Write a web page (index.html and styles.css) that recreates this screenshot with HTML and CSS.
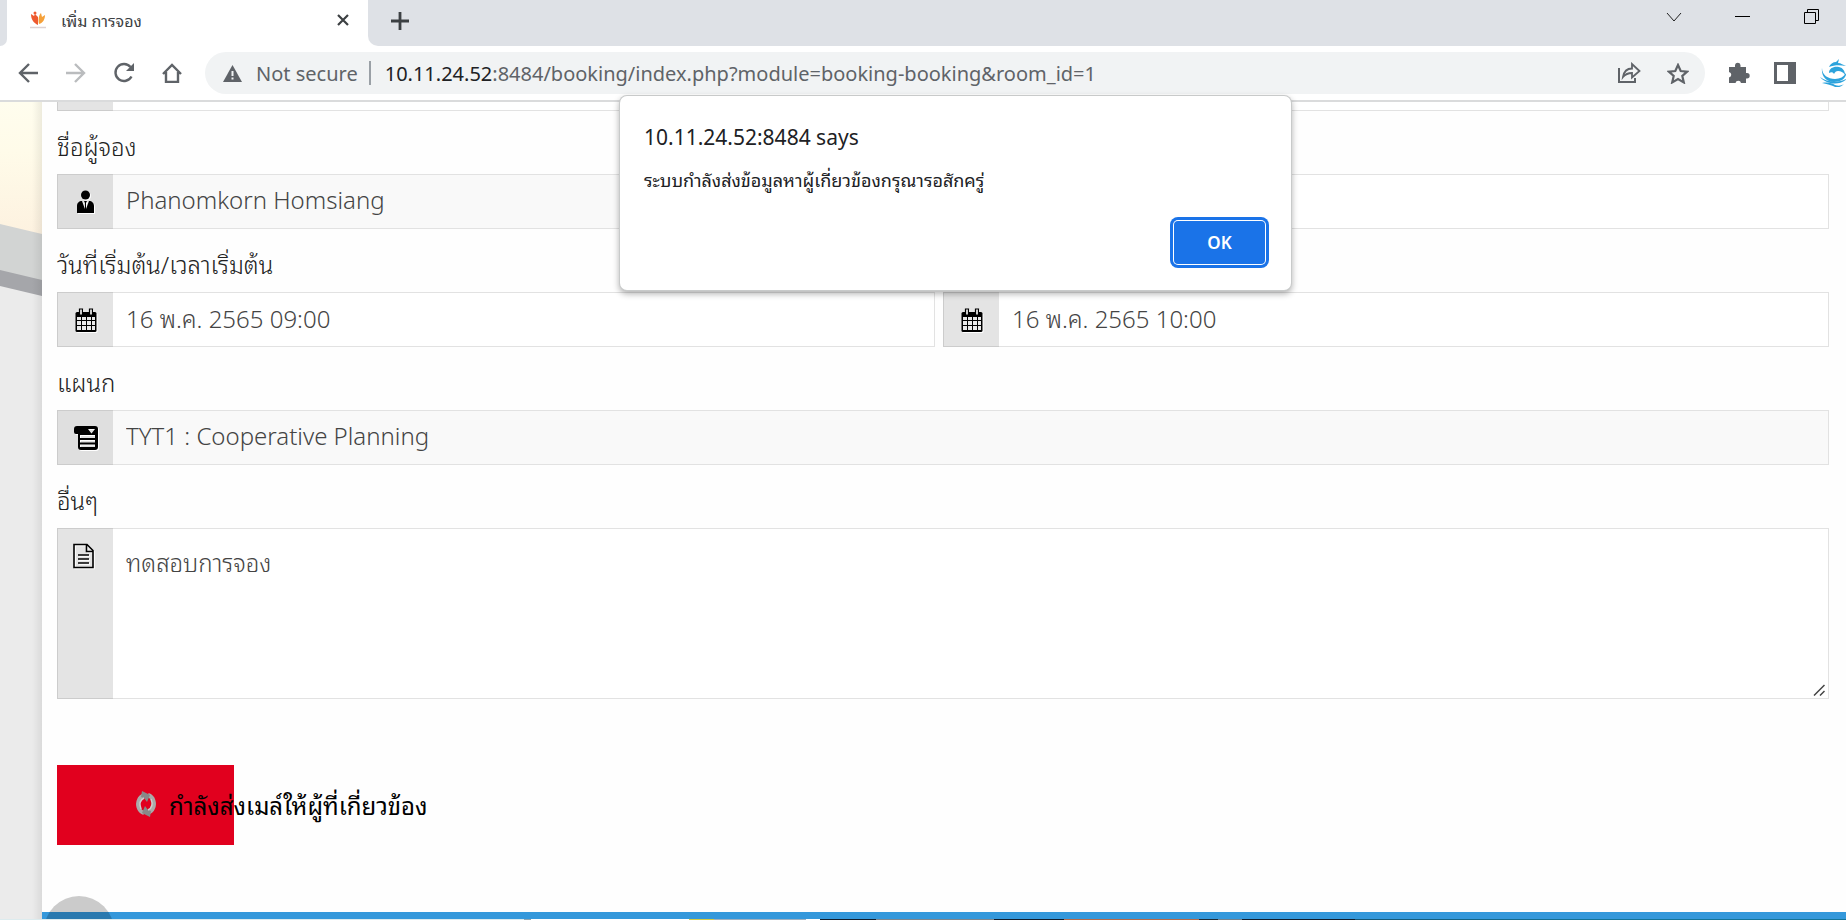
FILE: index.html
```html
<!DOCTYPE html>
<html lang="th">
<head>
<meta charset="utf-8">
<title>เพิ่ม การจอง</title>
<link rel="stylesheet" href="styles.css">
</head>
<body>
<header class="browser">
  <div class="tabstrip">
    <div class="prev-tab"></div>
    <div class="tab">
      <svg class="favicon" viewBox="0 0 16 18"><path d="M1 3l3 2 1-2 3 3v8C4 12 1 9 1 3z" fill="#ee5a2f"/><path d="M9 13c-1-5 0-9 2-11l1 4 3-2c0 4-2 8-6 9z" fill="#f5a13a"/><circle cx="5" cy="2" r="1.500" fill="#ee5a2f"/><path d="M0 16.500h16" stroke="#ddd2d2" stroke-width="1.500"/></svg>
      <span class="tab-title">เพิ่ม การจอง</span>
      <button class="icon-btn tab-close" aria-label="Close tab"><svg width="14" height="14" viewBox="0 0 14 14"><path d="M2 2l10 10M12 2L2 12" stroke="#3c4043" stroke-width="2.200"/></svg></button>
    </div>
    <button class="icon-btn new-tab" aria-label="New tab"><svg width="18" height="18" viewBox="0 0 18 18"><path d="M9 0v18M0 9h18" stroke="#3c4043" stroke-width="2.800"/></svg></button>
    <div class="window-controls">
      <button class="icon-btn" aria-label="Search tabs"><svg width="16" height="16" viewBox="0 0 16 16"><path d="M1 4l7 8 7-8" fill="none" stroke="#222" stroke-width="1"/></svg></button>
      <button class="icon-btn" aria-label="Minimize"><svg width="16" height="16" viewBox="0 0 16 16"><path d="M0 7.500h15" stroke="#000"/></svg></button>
      <button class="icon-btn" aria-label="Restore"><svg width="16" height="16" viewBox="0 0 16 16"><path d="M.5 3.500h11v11h-11zM3.500 3.500v-3h11v11h-3" fill="none" stroke="#000"/></svg></button>
    </div>
  </div>
  <div class="toolbar">
    <nav class="nav-buttons">
      <button class="icon-btn" aria-label="Back"><svg width="20" height="20" viewBox="0 0 20 20"><path d="M20 10H2M11 1l-9 9 9 9" fill="none" stroke="#5f6368" stroke-width="2.400"/></svg></button>
      <button class="icon-btn" aria-label="Forward"><svg width="20" height="20" viewBox="0 0 20 20"><path d="M0 10h18M9 1l9 9-9 9" fill="none" stroke="#babcbe" stroke-width="2.400"/></svg></button>
      <button class="icon-btn" aria-label="Reload"><svg width="22" height="22" viewBox="0 0 22 22"><path d="M18.500 14.500a8.500 8.500 0 1 1-1-9.500" fill="none" stroke="#5f6368" stroke-width="2.400"/><path d="M21 1v8h-8z" fill="#5f6368"/></svg></button>
      <button class="icon-btn" aria-label="Home"><svg width="20" height="20" viewBox="0 0 20 20"><path d="M1 11l9-9 9 9M4 9v10h12V9" fill="none" stroke="#5f6368" stroke-width="2.400"/></svg></button>
    </nav>
    <div class="omnibox">
      <svg width="19" height="17" viewBox="0 0 19 17"><path d="M9.500 0L19 17H0z" fill="#5f6368"/><path d="M9.500 6v5M9.500 12.500v2" stroke="#f1f3f4" stroke-width="2"/></svg>
      <span class="security">Not secure</span>
      <span class="divider"></span>
      <span class="url"><b>10.11.24.52</b>:8484/booking/index.php?module=booking-booking&amp;room_id=1</span>
      <button class="icon-btn" aria-label="Share"><svg width="23" height="22" viewBox="0 0 23 22"><path d="M1 6v14h16v-4" fill="none" stroke="#5f6368" stroke-width="2"/><path d="M5 15c1-6 4-8.500 9-8.500V2l7.500 7-7.500 6.500V11c-4 0-6.500 1-9 4z" fill="none" stroke="#5f6368" stroke-width="1.800"/></svg></button>
      <button class="icon-btn" aria-label="Bookmark"><svg width="22" height="21" viewBox="0 0 22 21"><path d="M11 2l2.700 6 6.500.7-4.900 4.300 1.500 6.400L11 16l-5.800 3.400L6.700 13 1.800 8.700 8.300 8z" fill="none" stroke="#5f6368" stroke-width="2.200"/></svg></button>
    </div>
    <div class="extensions">
      <button class="icon-btn" aria-label="Extensions"><svg width="22" height="22" viewBox="0 0 22 22"><path d="M1 5h6V3a2.800 2.800 0 0 1 5.500 0v2H18v6h1a2.700 2.700 0 0 1 0 5.400h-1V21h-5a2.800 2.800 0 0 0-5.500 0H1v-5.500a2.800 2.800 0 0 0 0-5.500z" fill="#5f6368"/></svg></button>
      <button class="icon-btn" aria-label="Side panel"><svg width="22" height="22" viewBox="0 0 22 22"><path d="M0 0h22v22H0zM3 3v16h11V3z" fill="#5f6368" fill-rule="evenodd"/></svg></button>
      <button class="icon-btn" aria-label="Profile"><svg width="28" height="28" viewBox="0 0 28 28" fill="#2ca3dc"><path d="M9 8c1-3 4-5 7-5l3-3-1 4c3 0 5 2 8 3-6-1-12-1-17 1z"/><path d="M9 14c0-5 5-7 10-6 4 1 6 4 6 8-2-3-4-4-7-4-2 0-3 1-4 3-1-2-3-2-5-1z"/><path d="M2 9c0 7 6 11 13 11 6 0 10-3 12-8-1 8-6 11-13 11C6 23 1 17 2 9z"/><path d="M0 18c7 5 18 7 28 1-9 9-22 6-28-1z"/><path d="M2 24c6-1 10 0 13 2 3 1 6 1 9-1-4 4-8 4-11 2-3-1-6-2-11-3z"/></svg></button>
    </div>
  </div>
</header>

<main class="page">
  <aside class="backdrop">
    <svg width="42" height="200" viewBox="0 0 42 200"><path d="M0 122l42 10v55L0 180z" fill="#d2d4d3"/><path d="M0 168l42 10v70H0z" fill="#a5a6aa"/><path d="M0 184l42 10v6H0z" fill="#ebebeb"/></svg>
  </aside>
  <form class="form">
    <div class="field field-cut"><span class="addon"></span></div>

    <div class="row">
      <div class="col">
        <label class="label" for="name">ชื่อผู้จอง</label>
        <div class="field readonly">
          <span class="addon"><svg class="glyph" width="20" height="24" viewBox="0 0 20 24"><circle cx="9.500" cy="5" r="4.500"/><path d="M1 23v-7c0-3 2-5 5-5l3 8v-6l-1-2h3l-1 2v6l3-8c3 0 5 2 5 5v7z"/></svg></span>
          <input id="name" type="text" value="Phanomkorn Homsiang" readonly>
        </div>
      </div>
      <div class="col">
        <label class="label" for="phone">&nbsp;</label>
        <div class="field">
          <span class="addon"></span>
          <input id="phone" type="text" aria-label="โทรศัพท์">
        </div>
      </div>
    </div>

    <div class="row">
      <div class="col">
        <label class="label" for="begin">วันที่เริ่มต้น/เวลาเริ่มต้น</label>
        <div class="field">
          <span class="addon"><svg class="glyph" width="26" height="26" viewBox="0 0 26 26"><rect x="2.500" y="5" width="21" height="20" rx="1.500" fill="#000"/><path d="M4 10h4v3H4zM9 10h4v3H9zM14 10h4v3h-4zM19 10h3v3h-3zM4 14h4v4H4zM9 14h4v4H9zM14 14h4v4h-4zM19 14h3v4h-3zM4 19h4v4H4zM9 19h4v4H9zM14 19h4v4h-4zM19 19h3v4h-3z" fill="#e9e9e9"/><path d="M6.500 2h3v6h-3zM16.500 2h3v6h-3z" fill="#e4e4e4" stroke="#000" stroke-width="1.200"/></svg></span>
          <input id="begin" type="text" value="16 พ.ค. 2565 09:00">
        </div>
      </div>
      <div class="col">
        <label class="label" for="end">&nbsp;</label>
        <div class="field">
          <span class="addon"><svg class="glyph" width="26" height="26" viewBox="0 0 26 26"><rect x="2.500" y="5" width="21" height="20" rx="1.500" fill="#000"/><path d="M4 10h4v3H4zM9 10h4v3H9zM14 10h4v3h-4zM19 10h3v3h-3zM4 14h4v4H4zM9 14h4v4H9zM14 14h4v4h-4zM19 14h3v4h-3zM4 19h4v4H4zM9 19h4v4H9zM14 19h4v4h-4zM19 19h3v4h-3z" fill="#e9e9e9"/><path d="M6.500 2h3v6h-3zM16.500 2h3v6h-3z" fill="#e4e4e4" stroke="#000" stroke-width="1.200"/></svg></span>
          <input id="end" type="text" value="16 พ.ค. 2565 10:00" aria-label="วันที่สิ้นสุด">
        </div>
      </div>
    </div>

    <label class="label" for="department">แผนก</label>
    <div class="field readonly">
      <span class="addon"><svg class="glyph" width="26" height="26" viewBox="0 0 26 26"><path fill-rule="evenodd" d="M4 1h18a3 3 0 0 1 3 3v18a3 3 0 0 1-3 3H8a3 3 0 0 1-3-3V9H3a2 2 0 0 1-2-2V4a3 3 0 0 1 3-3zM15 4l3.500 4.500L22 4zM7 10v3h15v-3zM7 15v2.500h15V15zM7 19.500V22h15v-2.500z"/></svg></span>
      <input id="department" type="text" value="TYT1 : Cooperative Planning" readonly>
    </div>

    <label class="label" for="comment">อื่นๆ</label>
    <div class="field field-area">
      <span class="addon"><svg class="glyph" width="24" height="26" viewBox="0 0 24 26"><path d="M2 1.500h13l6 6V24.500H2zM14.500 1.500v7H21" fill="none" stroke="#000" stroke-width="1.600"/><path d="M6 12h11M6 16h11M6 20h11" stroke="#000" stroke-width="1.600"/></svg></span>
      <textarea id="comment">ทดสอบการจอง</textarea>
      <svg class="grip" width="12" height="12" viewBox="0 0 12 12"><path d="M1 11.500L11.500 1M7 11.500l4.500-4.500" stroke="#444" stroke-width="1.500"/></svg>
    </div>

    <button class="submit" type="button"><svg width="20" height="26" viewBox="0 0 20 26" fill="none" stroke="#aaa" stroke-width="4"><path d="M8 22C2 20 1 13 3 9c1-3 3-4 6-5M12 4c6 2 7 9 5 13-1 3-3 4-6 5"/><path d="M6 0l8 4-3 7-3-4-3-1zM14 26l-8-4 3-7 3 4 3 1z" fill="#888" stroke="none"/><path d="M5 18C3 13 4 9 8 7M15 8c2 5 1 9-3 11" stroke="#d0cccc" stroke-width="1.500"/></svg><span>กำลังส่งเมล์ให้ผู้ที่เกี่ยวข้อง</span></button>

    <footer class="footer"></footer>
    <div class="round"></div>
  </form>
</main>
<div class="taskbar-edge"></div>

<section class="alert" role="alertdialog" aria-labelledby="alert-title" aria-describedby="alert-text">
  <h1 class="alert-title" id="alert-title">10.11.24.52:8484 says</h1>
  <p class="alert-text" id="alert-text">ระบบกำลังส่งข้อมูลหาผู้เกี่ยวข้องกรุณารอสักครู่</p>
  <div class="alert-actions"><button class="ok" type="button">OK</button></div>
</section>
</body>
</html>
```
FILE: styles.css
```css
* { box-sizing: border-box; }
body {
  margin: 0;
  height: 100vh;
  display: flex;
  flex-direction: column;
  overflow: hidden;
  position: relative;
  background: #fff;
  font-family: "Noto Sans", "Noto Sans Thai Looped", "Noto Looped Thai", Loma, Waree, Garuda, sans-serif;
  color: #222;
}
svg { display: block; flex: none; }
.icon-btn {
  border: 0;
  padding: 0;
  background: none;
  display: flex;
  align-items: center;
  justify-content: center;
}

/* Browser chrome */
.browser { flex: none; border-bottom: 2px solid #dadbdc; }
.tabstrip { display: flex; height: 46px; background: #fff; }
.prev-tab { width: 7px; border-radius: 0 0 8px 0; background: #dee1e6; }
.tab {
  width: 361px;
  padding: 0 18px 7px 23px;
  display: flex;
  align-items: center;
  background: #fff;
}
.favicon { width: 16px; height: 18px; }
.tab-title { flex: 1; margin-left: 15px; font-size: 16px; color: #3c4043; }
.new-tab { padding: 0 23px 5px; background: #dee1e6; border-radius: 0 0 0 10px; }
.window-controls { flex: 1; justify-content: flex-end; display: flex; gap: 53px; padding: 0 26px 12px 0; background: #dee1e6; }
.toolbar { display: flex; align-items: center; height: 54px; background: #fff; padding: 6px 0; }
.nav-buttons { display: flex; gap: 28px; padding: 0 23px 0 18px; }
.nav-buttons .icon-btn { width: 20px; }
.omnibox {
  flex: 1;
  height: 42px;
  display: flex;
  align-items: center;
  padding: 0 16px 0 18px;
  border-radius: 21px;
  background: #f1f3f4;
  font-family: "Noto Sans", sans-serif;
  font-size: 20px;
  color: #5f6368;
}
.security { margin-left: 14px; }
.divider { width: 2px; height: 24px; margin: 0 14px 0 11px; background: #9aa0a6; }
.url { flex: 1; white-space: nowrap; }
.url b { font-weight: 400; color: #202124; }
.omnibox .icon-btn + .icon-btn { margin-left: 26px; }
.extensions { display: flex; align-items: center; gap: 24px; margin: 0 -2px 0 23px; }

/* Booking page */
.page { flex: 1; min-height: 0; display: flex; }
.backdrop {
  width: 42px;
  background: linear-gradient(#fffdee, #fffbe9 50px, #fdf2e0 130px, #ebebeb 150px);
  position: relative;
}
.backdrop::after {
  content: "";
  position: absolute;
  inset: 0 0 0 auto;
  width: 10px;
  background: linear-gradient(to right, transparent, rgba(0, 0, 0, .07));
}
.form { flex: 1; position: relative; display: flex; flex-direction: column; padding: 0 17px 0 15px; background: #fefefe; overflow: hidden; }
.row { display: flex; }
.col { width: 50%; }
.col:first-child { padding-right: 8px; }
.label {
  display: block;
  height: 63px;
  padding-top: 10px;
  font-size: 24px;
  font-weight: 300;
  line-height: 52px;
}
.field { position: relative; height: 55px; display: flex; border: 1px solid #e2e2e2; background: #fff; flex: none; }
.field-cut { height: 9px; border-top: 0; }
.addon {
  flex: none;
  width: 56px;
  margin: -1px 0 -1px -1px;
  display: flex;
  align-items: center;
  justify-content: center;
  background: #e4e4e4;
  border: 1px solid #ccc;
  border-right: 0;
}
.readonly { background: #f9f9f9; }
.readonly .addon { background: #dfdfdf; }
.glyph { filter: drop-shadow(1px 1px 0 #fff); }
.field input, .field textarea {
  flex: 1;
  min-width: 0;
  margin: 0;
  padding: 0 13px 5px;
  border: 0;
  outline: 0;
  background: none;
  font-family: inherit;
  font-size: 24px;
  font-weight: 300;
  color: #444;
}
.field-area { height: 171px; }
.field-area .addon { align-items: flex-start; padding: 14px 4px 0 0; }
.field textarea { resize: none; padding-top: 13px; }
.grip { position: absolute; right: 3px; bottom: 2px; }
.submit {
  width: 177px;
  height: 80px;
  margin: 66px 0 0;
  padding: 0 0 2px 79px;
  display: flex;
  flex: none;
  align-items: center;
  gap: 13px;
  border: 0;
  background: #e1001e;
  color: #000;
  font-family: inherit;
  font-size: 24px;
  white-space: nowrap;
}
.footer { height: 7px; flex: none; margin: auto -17px 0 -15px; background: #3498db; }
.round { position: absolute; left: 2px; bottom: -47px; width: 70px; height: 70px; border-radius: 50%; background: rgba(0, 0, 0, .2); }
.taskbar-edge {
  height: 1px;
  flex: none;
  background: linear-gradient(to right, #dcebee 524px, #8fa5b0 524px 531px, #fff 531px 689px, #d4cb45 689px 714px, #9eb0bf 714px 806px, #fff 806px 820px, #101c2a 820px 876px, #7d868c 876px 994px, #101c2a 994px 1064px, #b56a48 1064px 1199px, #1d2a33 1199px 1218px, #71808a 1218px 1242px, #101c2a 1242px 1355px, #155674 1355px, #147397 1600px);
}

/* JavaScript alert */
.alert {
  position: absolute;
  left: 620px;
  top: 96px;
  width: 671px;
  padding: 26px 23px 22px 24px;
  border-radius: 7px;
  background: #fff;
  box-shadow: 0 0 0 1px #c8caca, 0 3px 6px 1px rgba(0, 0, 0, .3);
}
.alert-title { margin: 0; font: 400 21px/30px "Noto Sans", sans-serif; color: #202124; }
.alert-text { margin: 14px 0 0; font-size: 18px; line-height: 28px; color: #202124; }
.alert-actions { display: flex; justify-content: flex-end; padding: 27px 3px 4px 0; }
.ok {
  width: 91px;
  height: 43px;
  border: 0;
  border-radius: 4px;
  background: #1a73e8;
  color: #fff;
  font: 600 17px "Noto Sans", sans-serif;
  box-shadow: 0 0 0 1px #fff, 0 0 0 4px #1a73e8;
}
```
